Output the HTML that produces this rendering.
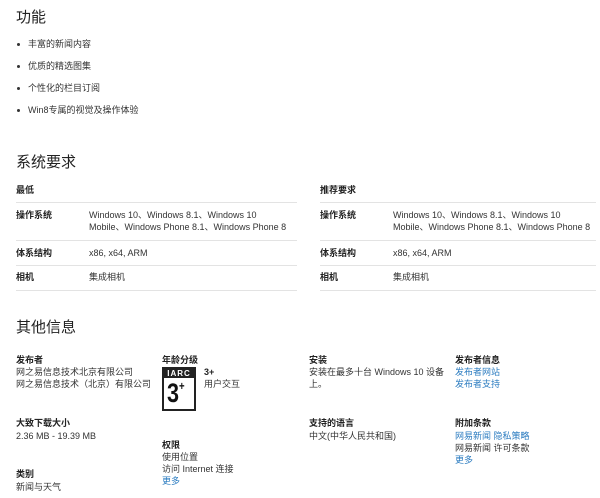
<!DOCTYPE html>
<html><head><meta charset="utf-8"><style>
body{margin:0;width:600px;height:498px;background:#fff;position:relative;overflow:hidden;font-family:"Liberation Sans","Noto Sans CJK SC",sans-serif;color:#333;font-size:9px;}
div,span{position:absolute;white-space:nowrap;line-height:12px;}
.h{font-size:15px;line-height:18px;color:#222;}
.b{font-weight:bold;color:#222;}
.l{color:#2a7bc0;}
.ln{height:1px;background:#e3e3e3;}
.dot{width:3px;height:3px;background:#333;border-radius:50%;}
</style></head><body>
<div class="h" style="left:16px;top:9px">功能</div>
<div class="dot" style="left:17px;top:43px"></div><div style="left:28px;top:38px">丰富的新闻内容</div>
<div class="dot" style="left:17px;top:65px"></div><div style="left:28px;top:60px">优质的精选图集</div>
<div class="dot" style="left:17px;top:87px"></div><div style="left:28px;top:82px">个性化的栏目订阅</div>
<div class="dot" style="left:17px;top:109px"></div><div style="left:28px;top:104px">Win8专属的视觉及操作体验</div>

<div class="h" style="left:16px;top:154px">系统要求</div>
<div class="b" style="left:16px;top:184px">最低</div>
<div class="b" style="left:320px;top:184px">推荐要求</div>
<div class="ln" style="left:16px;top:202px;width:281px"></div>
<div class="ln" style="left:320px;top:202px;width:276px"></div>
<div class="b" style="left:16px;top:209px">操作系统</div>
<div style="left:89px;top:209px">Windows 10、Windows 8.1、Windows 10<br>Mobile、Windows Phone 8.1、Windows Phone 8</div>
<div class="b" style="left:320px;top:209px">操作系统</div>
<div style="left:393px;top:209px">Windows 10、Windows 8.1、Windows 10<br>Mobile、Windows Phone 8.1、Windows Phone 8</div>
<div class="ln" style="left:16px;top:240px;width:281px"></div>
<div class="ln" style="left:320px;top:240px;width:276px"></div>
<div class="b" style="left:16px;top:247px">体系结构</div><div style="left:89px;top:247px">x86, x64, ARM</div>
<div class="b" style="left:320px;top:247px">体系结构</div><div style="left:393px;top:247px">x86, x64, ARM</div>
<div class="ln" style="left:16px;top:265px;width:281px"></div>
<div class="ln" style="left:320px;top:265px;width:276px"></div>
<div class="b" style="left:16px;top:271px">相机</div><div style="left:89px;top:271px">集成相机</div>
<div class="b" style="left:320px;top:271px">相机</div><div style="left:393px;top:271px">集成相机</div>
<div class="ln" style="left:16px;top:290px;width:281px"></div>
<div class="ln" style="left:320px;top:290px;width:276px"></div>

<div class="h" style="left:16px;top:319px">其他信息</div>
<div class="b" style="left:16px;top:354px">发布者</div>
<div style="left:16px;top:366px">网之易信息技术北京有限公司<br>网之易信息技术（北京）有限公司</div>
<div class="b" style="left:162px;top:354px">年龄分级</div>
<div style="left:162px;top:367px;width:30px;height:40px;border:2px solid #222;background:#fff"></div>
<div style="left:164px;top:369px;width:30px;height:9px;background:#222;color:#fff;font-size:8px;line-height:9px;font-weight:bold;text-align:center;letter-spacing:1px">IARC</div>
<div style="left:167px;top:379px;font-size:27px;line-height:28px;color:#111;font-weight:bold;transform:scaleX(0.8);transform-origin:left">3<span style="position:relative;font-size:12px;vertical-align:top;line-height:14px">+</span></div>
<div class="b" style="left:204px;top:366px">3+</div>
<div style="left:204px;top:378px">用户交互</div>
<div class="b" style="left:309px;top:354px">安装</div>
<div style="left:309px;top:366px">安装在最多十台 Windows 10 设备<br>上。</div>
<div class="b" style="left:455px;top:354px">发布者信息</div>
<div class="l" style="left:455px;top:366px">发布者网站<br>发布者支持</div>

<div class="b" style="left:16px;top:417px">大致下载大小</div>
<div style="left:16px;top:430px">2.36 MB - 19.39 MB</div>
<div class="b" style="left:162px;top:439px">权限</div>
<div style="left:162px;top:451px">使用位置<br>访问 Internet 连接</div>
<div class="l" style="left:162px;top:475px">更多</div>
<div class="b" style="left:16px;top:468px">类别</div>
<div style="left:16px;top:481px">新闻与天气</div>
<div class="b" style="left:309px;top:417px">支持的语言</div>
<div style="left:309px;top:430px">中文(中华人民共和国)</div>
<div class="b" style="left:455px;top:417px">附加条款</div>
<div class="l" style="left:455px;top:430px">网易新闻 隐私策略</div>
<div style="left:455px;top:442px">网易新闻 许可条款</div>
<div class="l" style="left:455px;top:454px">更多</div>
</body></html>
